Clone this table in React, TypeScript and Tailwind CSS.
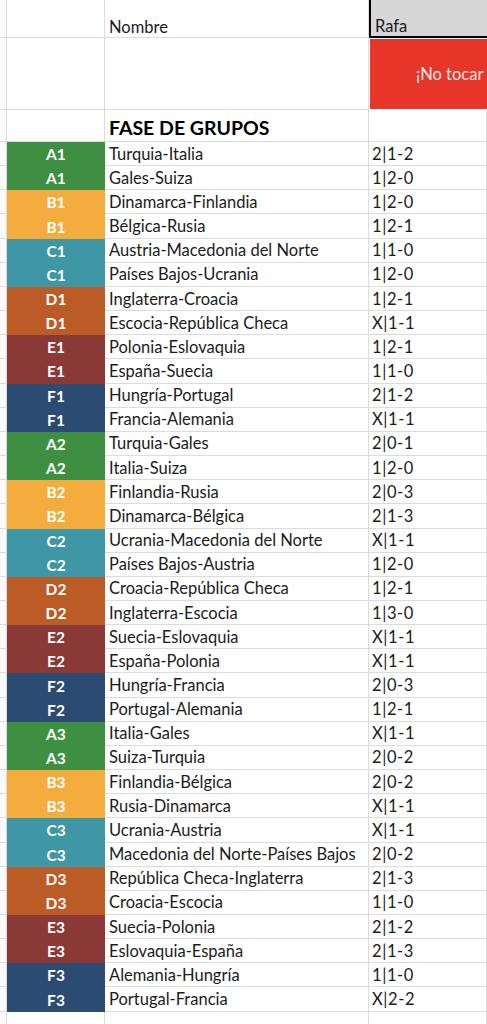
const COLORS: Record<string, string> = {
  A: 'bg-[#3e8f41]',
  B: 'bg-[#f4ad3d]',
  C: 'bg-[#3f96a4]',
  D: 'bg-[#bb5c26]',
  E: 'bg-[#8a3937]',
  F: 'bg-[#2c4b73]',
}

const MATCHES: [string, string, string][] = [
  ['A1', 'Turquia-Italia', '2|1-2'],
  ['A1', 'Gales-Suiza', '1|2-0'],
  ['B1', 'Dinamarca-Finlandia', '1|2-0'],
  ['B1', 'Bélgica-Rusia', '1|2-1'],
  ['C1', 'Austria-Macedonia del Norte', '1|1-0'],
  ['C1', 'Países Bajos-Ucrania', '1|2-0'],
  ['D1', 'Inglaterra-Croacia', '1|2-1'],
  ['D1', 'Escocia-República Checa', 'X|1-1'],
  ['E1', 'Polonia-Eslovaquia', '1|2-1'],
  ['E1', 'España-Suecia', '1|1-0'],
  ['F1', 'Hungría-Portugal', '2|1-2'],
  ['F1', 'Francia-Alemania', 'X|1-1'],
  ['A2', 'Turquia-Gales', '2|0-1'],
  ['A2', 'Italia-Suiza', '1|2-0'],
  ['B2', 'Finlandia-Rusia', '2|0-3'],
  ['B2', 'Dinamarca-Bélgica', '2|1-3'],
  ['C2', 'Ucrania-Macedonia del Norte', 'X|1-1'],
  ['C2', 'Países Bajos-Austria', '1|2-0'],
  ['D2', 'Croacia-República Checa', '1|2-1'],
  ['D2', 'Inglaterra-Escocia', '1|3-0'],
  ['E2', 'Suecia-Eslovaquia', 'X|1-1'],
  ['E2', 'España-Polonia', 'X|1-1'],
  ['F2', 'Hungría-Francia', '2|0-3'],
  ['F2', 'Portugal-Alemania', '1|2-1'],
  ['A3', 'Italia-Gales', 'X|1-1'],
  ['A3', 'Suiza-Turquia', '2|0-2'],
  ['B3', 'Finlandia-Bélgica', '2|0-2'],
  ['B3', 'Rusia-Dinamarca', 'X|1-1'],
  ['C3', 'Ucrania-Austria', 'X|1-1'],
  ['C3', 'Macedonia del Norte-Países Bajos', '2|0-2'],
  ['D3', 'República Checa-Inglaterra', '2|1-3'],
  ['D3', 'Croacia-Escocia', '1|1-0'],
  ['E3', 'Suecia-Polonia', '2|1-2'],
  ['E3', 'Eslovaquia-España', '2|1-3'],
  ['F3', 'Alemania-Hungría', '1|1-0'],
  ['F3', 'Portugal-Francia', 'X|2-2'],
]

const cols = 'grid grid-cols-[7px_98px_264px_118px]'
const cell = 'border-r border-b border-[#dcdcdc]'

export default function App() {
  return (
    <div className="w-[487px] h-[1024px] overflow-hidden bg-white text-[#1b1b1b] text-[16.5px] leading-[20px]" style={{ fontFamily: 'Lato, "Open Sans", sans-serif' }}>
      {/* header row */}
      <div className={`${cols} h-[38px]`}>
        <div className={`${cell} bg-[#fafafa]`} />
        <div className={cell} />
        <div className={`${cell} flex items-end pl-[4px] pb-0`}>Nombre</div>
        <div className="bg-[#d6d6d6] border-l-2 border-b-2 border-black flex items-end pl-[4px]">Rafa</div>
      </div>

      {/* warning row */}
      <div className={`${cols} h-[72px]`}>
        <div className={`${cell} bg-[#fafafa]`} />
        <div className={cell} />
        <div className={cell} />
        <div className="bg-[#e8352a] mt-[1px] ml-[1px] mb-[1px] flex items-center pl-[46px] overflow-hidden whitespace-nowrap text-[#fde9e7]">
          ¡No tocar
        </div>
      </div>

      {/* section title */}
      <div className={`${cols} h-[32px]`}>
        <div className={`${cell} bg-[#fafafa]`} />
        <div className={cell} />
        <div className={`${cell} flex items-end pl-[4px] pb-[3px] font-bold text-[19.5px] text-black`}>FASE DE GRUPOS</div>
        <div className={cell} />
      </div>

      {MATCHES.map(([group, name, bet], i) => (
        <div key={i} className={`${cols} h-[24.17px]`}>
          <div className={`${cell} bg-[#fafafa]`} />
          <div className={`${COLORS[group[0]]} flex items-center justify-center font-bold text-white text-[15.5px]`}>{group}</div>
          <div className={`${cell} flex items-center pl-[4px] whitespace-nowrap`}>{name}</div>
          <div className={`${cell} flex items-center pl-[3px] tracking-[0.6px]`}>{bet}</div>
        </div>
      ))}

      <div className={`${cols} h-[24px]`}>
        <div className={`${cell} bg-[#fafafa]`} />
        <div className={cell} />
        <div className={cell} />
        <div className={cell} />
      </div>
    </div>
  )
}
